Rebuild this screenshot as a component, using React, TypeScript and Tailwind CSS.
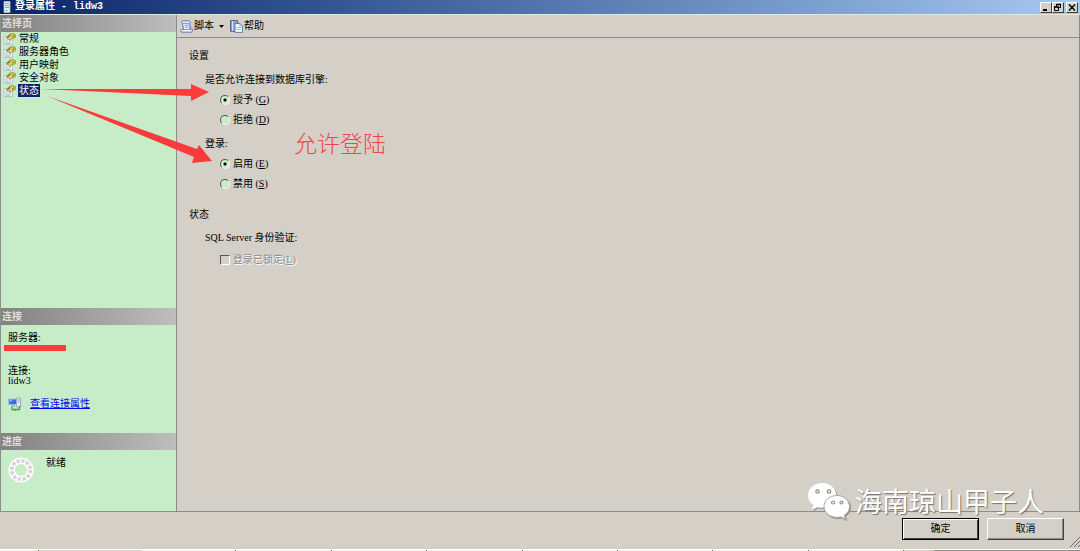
import React, { useState } from "react";

/* ------------------ DATA ------------------ */

const PAGES = ["常规", "服务器角色", "用户映射", "安全对象", "状态"];

const TASKS = [95, 96, 95, 96, 95, 95, 96, 95];

/* ------------------ ICONS ------------------ */

const PageIcon = () => (
  <svg viewBox="0 0 13 12" className="h-3 w-[13px] shrink-0">
    <path d="M1 3.5h8.5v8H1z" fill="#f4f6fb" stroke="#a3adbd" strokeWidth=".7" />
    <path d="M2.5 6h2M2.5 8h2M2.5 10h5M6 8h2" stroke="#7f8fb5" strokeWidth=".8" />
    <path d="M3.5 4.5 6.5 1.2 10 .6l2.5 1.2-.4 3L9 5.5 6.8 7.2 5.2 6z" fill="#e3cf5c" stroke="#77702c" strokeWidth=".7" />
    <path d="m4.5 4.5 3-2.2M9.5 3.5l1.6-.6" stroke="#3d3b20" strokeWidth=".9" />
  </svg>
);

const ServerIcon = () => (
  <svg viewBox="0 0 8 12" className="h-3 w-2 shrink-0">
    <path d="M1 .5h6v11H1z" fill="#e8f0fb" stroke="#a9bcdb" strokeWidth=".8" />
    <path d="M2 2.5h4M2 4.5h4M2 6.5h4" stroke="#6f8bbd" strokeWidth=".8" />
    <path d="M2.5 9.5h2" stroke="#5fae5c" />
  </svg>
);

const ScriptIcon = () => (
  <svg viewBox="0 0 13 13" className="h-[13px] w-[13px] shrink-0">
    <path d="M2.5.8h6.700c1.600 0 1.700 2.400.4 2.600l1.300 5.800h1.300c.7 1.200 0 3-1.200 3H2C.4 12.200.2 9.600 1.600 9.400h2L2.400 3.400C1 3 1.300.8 2.500.8z" fill="#e6effd" stroke="#4a6cb3" strokeWidth=".9" />
    <path d="M2.500 3.400h6.800M4.500 5.300H8M5 7.300h3.500M3.600 9.500h7" stroke="#6487cb" strokeWidth=".8" />
    <path d="m8.500 3.500 1.300 5.700" stroke="#9db8ea" />
  </svg>
);

const HelpIcon = () => (
  <svg viewBox="0 0 13 13" className="h-[13px] w-[13px] shrink-0">
    <path d="M.6.600h7v10.800h-7z" fill="#8fa8dd" stroke="#3b5594" strokeWidth=".9" />
    <path d="M2.500 1v10" stroke="#dbe5f8" />
    <path d="M5 3.500h5l2.400 2.400v6.500H5z" fill="#f5f8ff" stroke="#5470ad" strokeWidth=".9" />
    <path d="M9.800 3.700v2.400h2.400M6.500 7.500h4.300M6.500 9.500h4.300" fill="none" stroke="#8ba4d6" strokeWidth=".8" />
  </svg>
);

const ConnectionIcon = () => (
  <svg viewBox="0 0 14 14" className="h-[14px] w-[14px] shrink-0">
    <path d="M8.500 1h4v9h-4z" fill="#e9edf2" stroke="#8b97a5" strokeWidth=".8" />
    <path d="M9.500 3h2M9.500 5h2" stroke="#7d8b9c" strokeWidth=".8" />
    <path d="M.7 2h8v5.600h-8z" fill="#2f6fd8" stroke="#a9bedb" />
    <path d="m1.500 2.800 3.500-.2-2.800 3z" fill="#8dbcf5" />
    <path d="M3 9h4" stroke="#7d8b9c" />
    <path d="M4 10v2.500h7.500V9M7 12.500V14" fill="none" stroke="#4f9b3e" strokeWidth="1.300" />
  </svg>
);

const ProgressRing = () => (
  <svg viewBox="0 0 26 26" className="h-[26px] w-[26px] shrink-0">
    <circle cx="13" cy="13" r="9.300" fill="none" stroke="#fff" strokeWidth="6.500" />
    <circle cx="13" cy="13" r="9.300" fill="none" stroke="#d8d2d8" strokeWidth="3.600" strokeDasharray="3.300 1.570" />
  </svg>
);

const ChatLogo = () => (
  <svg viewBox="0 0 44 38" className="h-[38px] w-11 shrink-0 drop-shadow-[1px_1px_0_#8d8a84]">
    <path d="M15 1C7 1 1 6.500 1 13.500c0 4 2 7.300 5.200 9.600L5 28l5.500-2.800c1.600.4 3 .6 4.500.6 8.200 0 14.500-5.400 14.500-12.300S23.200 1 15 1z" fill="#fff" />
    <path d="M30 13.500c-7.400 0-13 4.900-13 11s5.600 10.900 13 10.900c1.400 0 2.800-.2 4-.5l4.500 2.600-1.100-4.200c3.200-2.100 5.100-5.200 5.100-8.800 0-6.100-5.400-11-12.500-11z" fill="#fff" stroke="#aaa69f" />
    <g fill="#fff" stroke="#918e88" strokeWidth="1.200">
      <circle cx="10.500" cy="9.500" r="1.700" />
      <circle cx="22" cy="9.500" r="1.700" />
      <circle cx="26" cy="20.500" r="1.500" />
      <circle cx="34.500" cy="20.500" r="1.500" />
    </g>
  </svg>
);

/* ------------------ PIECES ------------------ */

const Key = ({ k }: { k: string }) => (
  <span>(<span className="underline">{k}</span>)</span>
);

const SectionTitle = ({ children }: { children: React.ReactNode }) => (
  <h2 className="h-[17px] bg-linear-to-r from-[#828282] to-[#bebebe] pl-px text-[10px] leading-[17px] font-bold text-[#e2dfd9]">
    {children}
  </h2>
);

const Radio = ({ name, label, k, checked, onChange }: { name: string; label: string; k: string; checked: boolean; onChange: () => void }) => (
  <label className="flex h-5 items-center gap-[3px] pl-[15px]">
    <input
      type="radio"
      name={name}
      checked={checked}
      onChange={onChange}
      className="h-[10px] w-[10px] appearance-none rounded-full border border-t-[#555] border-r-[#f5f5f0] border-b-[#f5f5f0] border-l-[#555] bg-[#c7edc8] checked:bg-[radial-gradient(circle,#000_0_1px,#c7edc8_2px)]"
    />
    <span>{label} <Key k={k} /></span>
  </label>
);

const CaptionButton = ({ label, children }: { label: string; children: React.ReactNode }) => (
  <button aria-label={label} className="flex h-[11px] w-3 items-center justify-center border border-t-white border-r-[#404040] border-b-[#404040] border-l-white bg-[#d4d0c8]">
    <svg viewBox="0 0 10 9" className="h-[9px] w-[10px]" fill="none" stroke="#000">{children}</svg>
  </button>
);

/* ------------------ MAIN COMPONENT ------------------ */

export default function App() {
  const [page, setPage] = useState("状态");
  const [connect, setConnect] = useState("grant");
  const [login, setLogin] = useState("enabled");

  return (
    <div className="relative flex min-h-screen w-full flex-col bg-[#d4d0c8] font-['Liberation_Serif','Noto_Sans_CJK_SC',serif] text-[10px] leading-3 text-black">
      <header className="flex h-[14px] items-center bg-linear-to-r from-[#0a246a] to-[#a6caf0] pl-[3px] pr-[2px] text-white">
        <ServerIcon />
        <h1 className="ml-1 flex-1 font-['Liberation_Mono','Noto_Sans_CJK_SC',monospace] leading-[14px] font-bold">登录属性 - lidw3</h1>
        <CaptionButton label="最小化"><path d="M2 7h4" strokeWidth="2" /></CaptionButton>
        <CaptionButton label="还原"><path d="M3.500 3V1.500h4v3H6M1.500 4h4v3.500h-4z" /><path d="M3 1.500h5M1 4h5" strokeWidth="1.500" /></CaptionButton>
        <div className="w-[2px]" />
        <CaptionButton label="关闭"><path d="m2 1.500 6 6m0-6-6 6" strokeWidth="1.400" /></CaptionButton>
      </header>

      <div className="flex flex-1 border-t border-[#e8e6e1]">
        <aside className="flex w-[177px] shrink-0 flex-col border-r border-b border-l border-[#8c8c88] bg-[#c7edc8]">
          <SectionTitle>选择页</SectionTitle>
          <nav className="flex flex-1 flex-col">
            {PAGES.map((name) => (
              <button key={name} onClick={() => setPage(name)} className="flex h-[13px] items-center gap-[2px] pl-[2px]">
                <PageIcon />
                <span className={`px-px leading-[13px] ${page === name ? "bg-[#0a246a] text-white" : ""}`}>{name}</span>
              </button>
            ))}
          </nav>

          <SectionTitle>连接</SectionTitle>
          <section className="h-[108px] px-[7px] pt-[7px]">
            <div>服务器:</div>
            <div className="mt-px -ml-1 h-[6px] w-[62px] bg-[#fb3b3b]" />
            <div className="mt-[14px]">连接:</div>
            <div className="leading-2">lidw3</div>
            <div className="mt-3 flex items-center gap-2">
              <ConnectionIcon />
              <a href="#" className="text-[#0000ff] underline">查看连接属性</a>
            </div>
          </section>

          <SectionTitle>进度</SectionTitle>
          <section className="flex h-[61px] gap-3 px-[7px] pt-[7px]">
            <ProgressRing />
            <span>就绪</span>
          </section>
        </aside>

        <main className="flex flex-1 flex-col border-r border-b border-[#8c8c88]">
          <div className="flex h-[23px] items-center border-b border-[#8c8c88] pl-[3px]">
            <button className="flex items-center gap-px">
              <ScriptIcon />脚本
              <svg viewBox="0 0 5 3" className="ml-1 h-[3px] w-[5px]"><path d="M0 0h5L2.500 3z" /></svg>
            </button>
            <button className="ml-[6px] flex items-center gap-px"><HelpIcon />帮助</button>
          </div>

          <div className="px-3 pt-2 leading-5">
            <h2>设置</h2>
            <fieldset className="mt-1 pl-4">
              <legend className="block">是否允许连接到数据库引擎:</legend>
              <Radio name="connect" label="授予" k="G" checked={connect === "grant"} onChange={() => setConnect("grant")} />
              <Radio name="connect" label="拒绝" k="D" checked={connect === "deny"} onChange={() => setConnect("deny")} />
            </fieldset>
            <fieldset className="mt-1 pl-4">
              <legend>登录:</legend>
              <Radio name="login" label="启用" k="E" checked={login === "enabled"} onChange={() => setLogin("enabled")} />
              <Radio name="login" label="禁用" k="S" checked={login === "disabled"} onChange={() => setLogin("disabled")} />
            </fieldset>
            <h2 className="mt-[11px]">状态</h2>
            <div className="mt-[3px] pl-4">
              <p>SQL Server 身份验证:</p>
              <label className="mt-[2px] flex h-5 items-center gap-[3px] pl-[15px] text-[#8c8c88] [text-shadow:1px_1px_0_#fff]">
                <input type="checkbox" disabled className="h-[10px] w-[10px] appearance-none border border-t-[#555] border-r-white border-b-white border-l-[#555]" />
                <span>登录已锁定<Key k="L" /></span>
              </label>
            </div>
          </div>
        </main>
      </div>

      <footer className="flex h-[37px] items-start justify-end gap-2 pt-[6px] pr-4">
        <button className="h-[22px] w-[77px] border border-black bg-[#d4d0c8] shadow-[inset_1px_1px_0_#fff,inset_-1px_-1px_0_#404040]">确定</button>
        <button className="h-[22px] w-[77px] border border-t-white border-r-[#404040] border-b-[#404040] border-l-white bg-[#d4d0c8] shadow-[inset_-1px_-1px_0_#8c8c88]">取消</button>
      </footer>
      <div className="flex h-[2px] overflow-hidden border-t border-white">
        <div className="h-px w-[39px] border-r border-[#606060] bg-[#f4f2ee]" />
        <div className="h-px w-[102px]" />
        {TASKS.map((w, i) => (
          <div key={i} className="h-px border-r border-[#606060] bg-[#f4f2ee]" style={{ width: w }} />
        ))}
        <div className="h-px w-[30px]" />
        <div className="h-px flex-1 bg-[#8c8c88]" />
      </div>

      {/* resize grip */}
      <svg viewBox="0 0 10 10" className="absolute right-0 bottom-1 h-[10px] w-[10px]" stroke="#6f6d69"><path d="m0 10 10-10M4 10l6-6M8 10l2-2" /></svg>

      {/* arrows and note */}
      <svg viewBox="0 0 220 170" className="pointer-events-none absolute top-0 left-0 h-[170px] w-[220px]" fill="#fb3b3b">
        <path d="m41 89 150 0V84l18 8-18 9v-5z" />
        <path d="m47 96 150 53 2-4 13 16-20 2 2-6z" />
      </svg>
      <p className="absolute top-[131px] left-[294px] text-[23px] leading-7 font-light text-[#f24545]">允许登陆</p>

      {/* watermark */}
      <div className="pointer-events-none absolute right-9 bottom-[31px] flex items-center gap-1 font-['Noto_Sans_CJK_SC',sans-serif] text-[27px] leading-9 text-white [text-shadow:1px_1px_1px_#77746f]">
        <ChatLogo />
        <span>海南琼山甲子人</span>
      </div>
    </div>
  );
}
